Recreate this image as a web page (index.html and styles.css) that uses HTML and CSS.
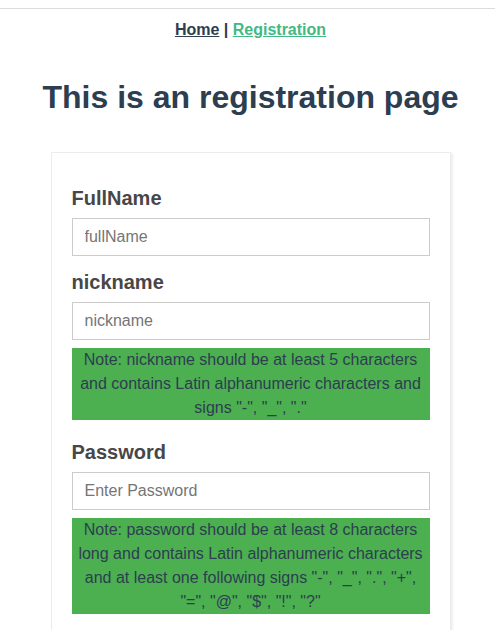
FILE: index.html
```html
<!DOCTYPE html>
<html lang="en">
<head>
<meta charset="utf-8">
<title>Registration</title>
<link rel="stylesheet" href="styles.css">
</head>
<body>
<div class="topline"></div>
<div class="app">
  <nav class="nav">
    <a href="#" class="nav-link">Home</a> | <a href="#" class="nav-link active">Registration</a>
  </nav>
  <h1 class="title">This is an registration page</h1>
  <form class="card">
    <div class="field">
      <label class="label" for="fullName">FullName</label>
      <input class="input" id="fullName" type="text" placeholder="fullName">
    </div>
    <div class="field">
      <label class="label" for="nickname">nickname</label>
      <input class="input" id="nickname" type="text" placeholder="nickname">
      <div class="note">Note: nickname should be at least 5 characters and contains Latin alphanumeric characters and signs "-", "_", "."</div>
    </div>
    <div class="field">
      <label class="label" for="password">Password</label>
      <input class="input" id="password" type="password" placeholder="Enter Password">
      <div class="note">Note: password should be at least 8 characters long and contains Latin alphanumeric characters and at least one following signs "-", "_", ".", "+", "=", "@", "$", "!", "?"</div>
    </div>
  </form>
</div>
</body>
</html>
```

FILE: styles.css
```css
html, body {
  margin: 0;
  padding: 0;
  background: #ffffff;
}

body {
  font-family: "Liberation Sans", Arial, Helvetica, sans-serif;
  color: #2c3e50;
}

.topline {
  margin-top: 8px;
  border-top: 1px solid #dcdcdc;
}

.app {
  padding-left: 6px;
  text-align: center;
}

.nav {
  padding-top: 12px;
  font-size: 16px;
  line-height: 18px;
  font-weight: bold;
  color: #2c3e50;
}

.nav-link {
  color: #2c3e50;
  text-decoration: underline;
}

.nav-link.active {
  color: #42b983;
}

.title {
  margin: 40px 0 36px;
  font-size: 32px;
  line-height: 37px;
  font-weight: bold;
  color: #2c3e50;
}

.card {
  box-sizing: border-box;
  width: 400px;
  margin: 0 auto;
  padding: 27px 20px 20px;
  border: 1px solid #ececec;
  box-shadow: 2px 1px 2px rgba(0, 0, 0, 0.07);
  text-align: left;
}

.field {
  display: flex;
  flex-direction: column;
}

.label {
  margin-top: 7px;
  font-size: 20px;
  line-height: 23px;
  font-weight: bold;
  color: #474747;
}

.input {
  box-sizing: border-box;
  width: 100%;
  height: 38px;
  margin: 8px 0;
  padding: 0 12px;
  border: 1px solid #cccccc;
  font-family: "Liberation Sans", Arial, sans-serif;
  font-size: 16px;
  color: #333333;
  background: #ffffff;
}

.input::placeholder {
  color: #757575;
}

.note {
  margin-bottom: 14px;
  padding: 0 4px;
  background: #4caf50;
  color: #2c3e50;
  font-size: 16px;
  line-height: 24px;
  text-align: center;
}
```
